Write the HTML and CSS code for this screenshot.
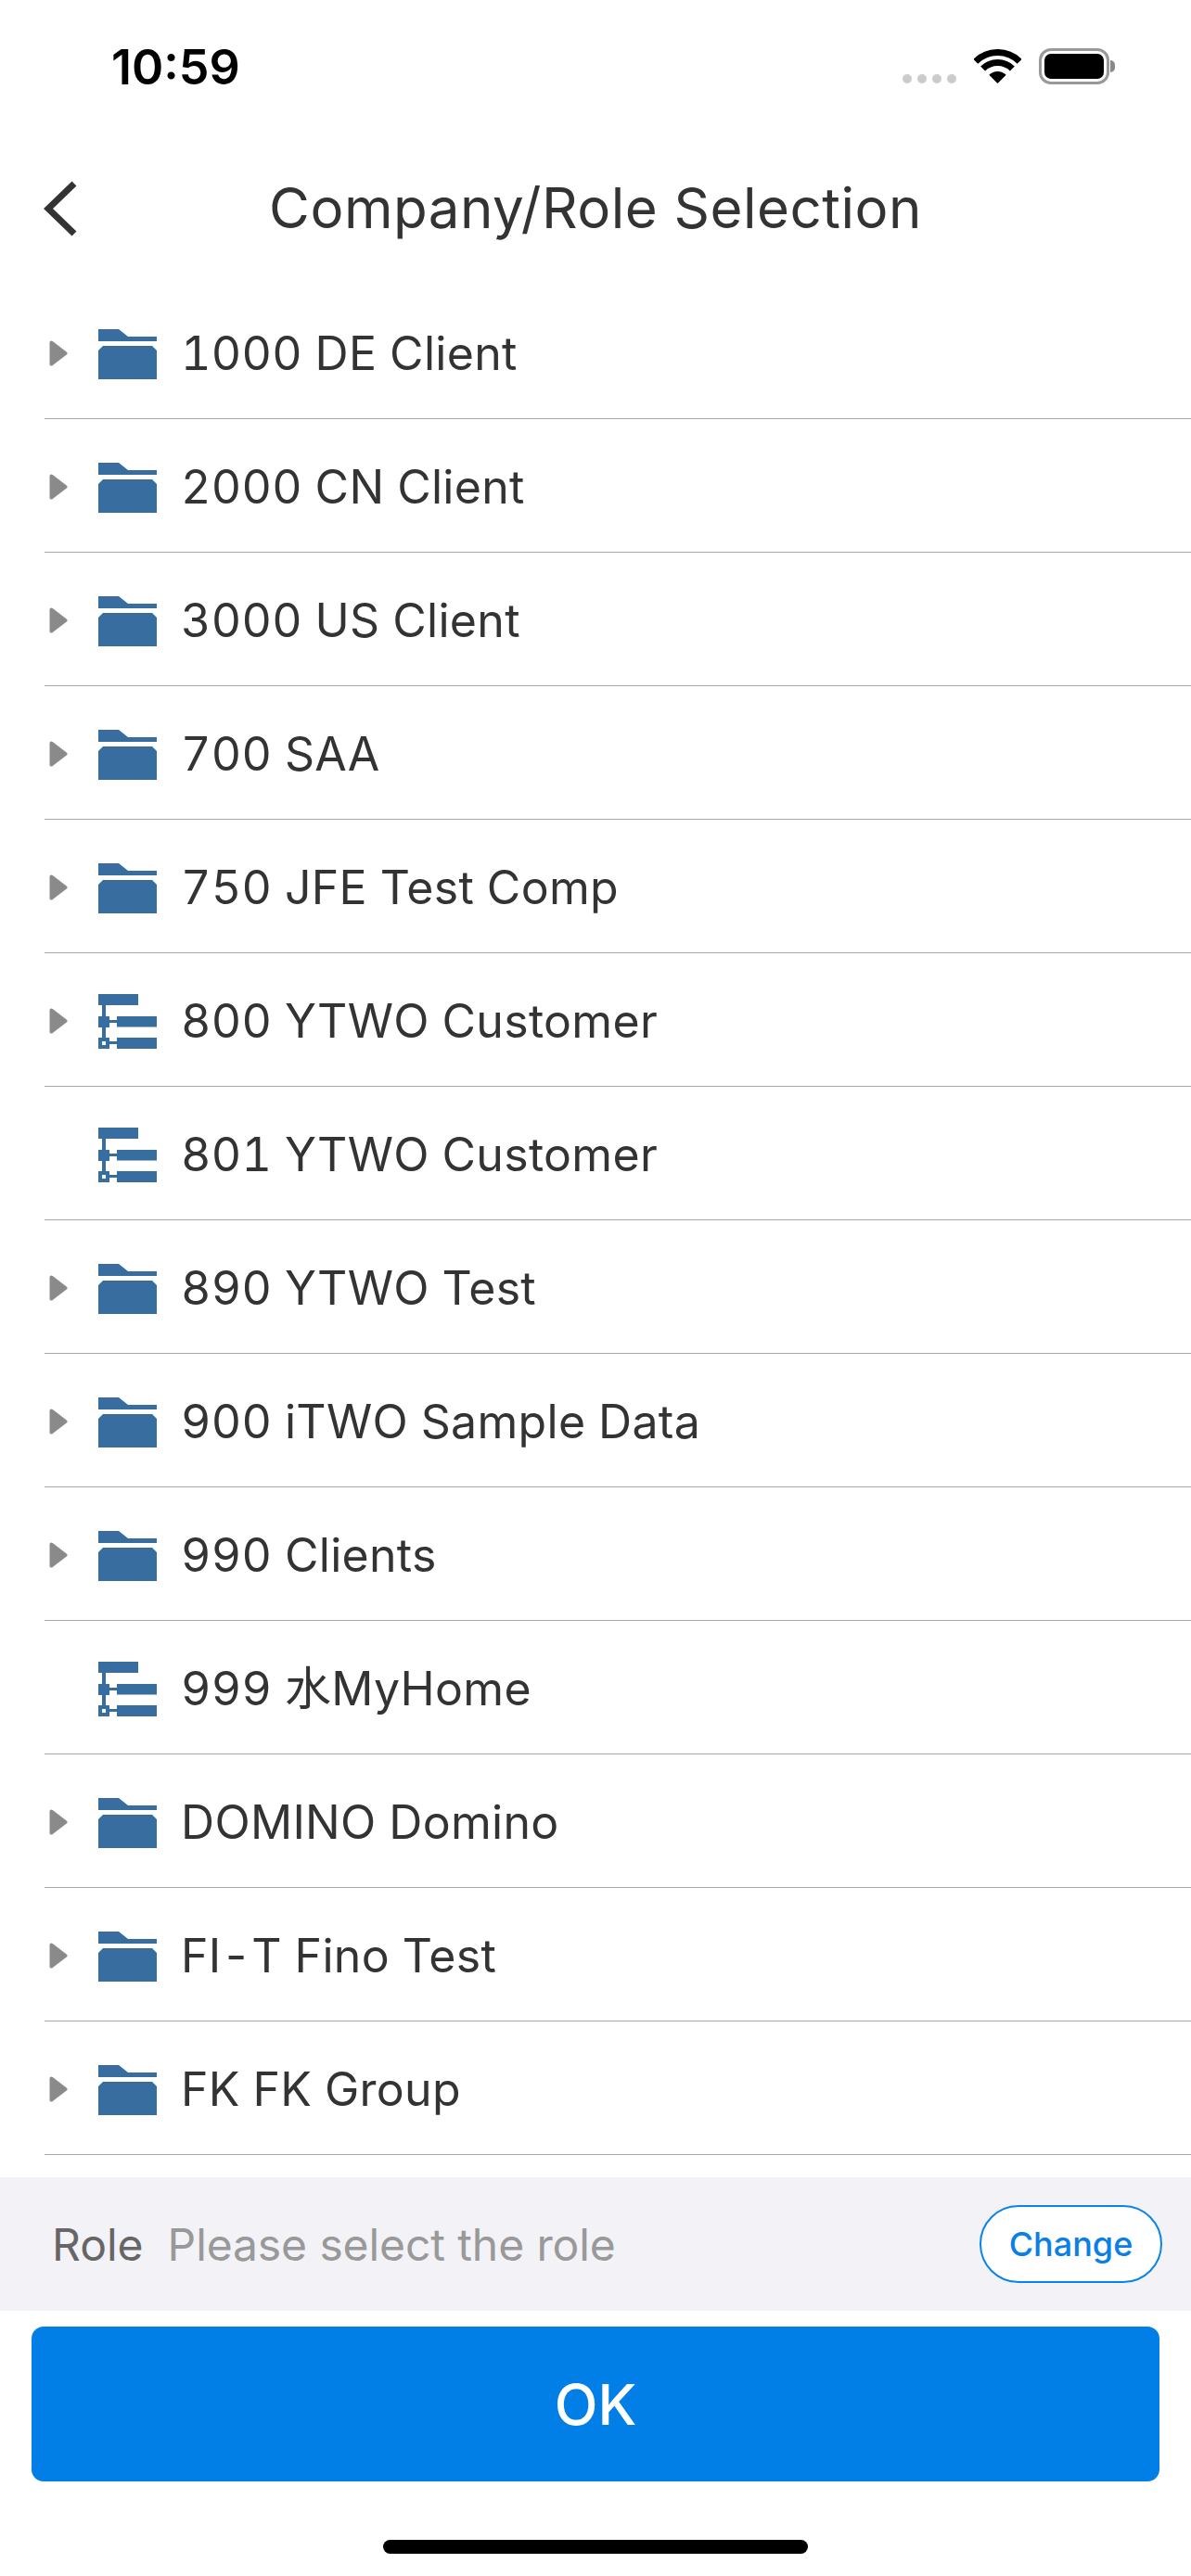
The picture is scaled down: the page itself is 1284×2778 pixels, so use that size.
FILE: index.html
```html
<!DOCTYPE html>
<html lang="en">
<head>
<meta charset="utf-8">
<title>Company/Role Selection</title>
<link rel="stylesheet" href="styles.css">
</head>
<body>
<svg class="sprite" width="0" height="0" aria-hidden="true">
  <symbol id="arrow" viewBox="0 0 20 28"><path d="M2.500 2.500 L17.500 14 L2.500 25.500 Z" fill="#8a8a8a" stroke="#8a8a8a" stroke-width="4" stroke-linejoin="round"/></symbol>
  <symbol id="folder" viewBox="0 0 63 60"><path fill="#386e9f" d="M0 3H22L32 11H63V16H0Z"/><path fill="#386e9f" d="M5 21H58L63 26V57H0V26Z"/></symbol>
  <symbol id="tree" viewBox="0 0 63 60"><g fill="#386e9f"><rect x="0" y="0" width="43" height="12"/><rect x="4" y="12" width="4" height="36"/><rect x="20" y="24" width="43" height="11.500"/><rect x="20" y="47" width="43" height="12"/><rect x="12" y="28" width="8" height="3"/><rect x="12" y="51" width="8" height="3"/><path fill-rule="evenodd" d="M0 24H12V36H0ZM4 28V32H8V28Z"/><path fill-rule="evenodd" d="M0 47H12V59H0ZM4 51V55H8V51Z"/></g></symbol>
</svg>
<div class="screen">
  <div class="status">
    <span class="time">10:59</span>
    <div class="status-icons">
      <div class="dots"><i></i><i></i><i></i><i></i></div>
      <svg class="wifi" width="51" height="37" viewBox="0 0 51 37"><g fill="none" stroke="#000" stroke-width="7"><path d="M1.810 13.310A33.500 33.500 0 0 1 49.190 13.310"/><path d="M9.600 21.100A22.500 22.500 0 0 1 41.400 21.100"/></g><path d="M25.500 37L16.310 27.810A13 13 0 0 1 34.690 27.810Z"/></svg>
      <div class="battery"><div class="battery-shell"><div class="battery-fill"></div></div><div class="battery-nub"></div></div>
    </div>
  </div>
  <header class="nav">
    <svg class="back" width="36" height="60" viewBox="0 0 36 60"><path d="M33 3L5 30L33 57" fill="none" stroke="#333" stroke-width="7"/></svg>
    <h1 class="title">Company/Role Selection</h1>
  </header>
  <main class="list">
    <div class="row"><svg class="arrow"><use href="#arrow"/></svg><svg class="icon"><use href="#folder"/></svg><span class="label">1000 DE Client</span></div>
    <div class="row"><svg class="arrow"><use href="#arrow"/></svg><svg class="icon"><use href="#folder"/></svg><span class="label">2000 CN Client</span></div>
    <div class="row"><svg class="arrow"><use href="#arrow"/></svg><svg class="icon"><use href="#folder"/></svg><span class="label">3000 US Client</span></div>
    <div class="row"><svg class="arrow"><use href="#arrow"/></svg><svg class="icon"><use href="#folder"/></svg><span class="label">700 SAA</span></div>
    <div class="row"><svg class="arrow"><use href="#arrow"/></svg><svg class="icon"><use href="#folder"/></svg><span class="label">750 JFE Test Comp</span></div>
    <div class="row"><svg class="arrow"><use href="#arrow"/></svg><svg class="icon"><use href="#tree"/></svg><span class="label">800 YTWO Customer</span></div>
    <div class="row"><span class="arrow"></span><svg class="icon"><use href="#tree"/></svg><span class="label">801 YTWO Customer</span></div>
    <div class="row"><svg class="arrow"><use href="#arrow"/></svg><svg class="icon"><use href="#folder"/></svg><span class="label">890 YTWO Test</span></div>
    <div class="row"><svg class="arrow"><use href="#arrow"/></svg><svg class="icon"><use href="#folder"/></svg><span class="label">900 iTWO Sample Data</span></div>
    <div class="row"><svg class="arrow"><use href="#arrow"/></svg><svg class="icon"><use href="#folder"/></svg><span class="label">990 Clients</span></div>
    <div class="row"><span class="arrow"></span><svg class="icon"><use href="#tree"/></svg><span class="label">999 水MyHome</span></div>
    <div class="row"><svg class="arrow"><use href="#arrow"/></svg><svg class="icon"><use href="#folder"/></svg><span class="label">DOMINO Domino</span></div>
    <div class="row"><svg class="arrow"><use href="#arrow"/></svg><svg class="icon"><use href="#folder"/></svg><span class="label">FI-T Fino Test</span></div>
    <div class="row"><svg class="arrow"><use href="#arrow"/></svg><svg class="icon"><use href="#folder"/></svg><span class="label">FK FK Group</span></div>
  </main>
  <section class="role">
    <span class="role-label">Role</span>
    <span class="role-value">Please select the role</span>
    <button class="change">Change</button>
  </section>
  <div class="actions"><button class="ok">OK</button></div>
  <div class="home"><div class="home-bar"></div></div>
</div>
</body>
</html>
```
FILE: styles.css
```css
* { box-sizing: border-box; }
html, body { margin: 0; padding: 0; background: #fff; }
body { font-family: Inter, "Noto Sans CJK SC", sans-serif; color: #333; }
.sprite { position: absolute; }
.screen { width: 1284px; height: 2778px; display: flex; flex-direction: column; overflow: hidden; background: #fff; }

.status { height: 150px; flex: none; display: flex; justify-content: space-between; align-items: flex-start; padding: 48px 82px 0 120px; }
.time { font-size: 52px; line-height: 50px; font-weight: 600; color: #000; }
.status-icons { display: flex; align-items: flex-start; padding-top: 4px; }
.dots { display: flex; gap: 6px; margin: 28px 19px 0 0; }
.dots i { display: block; width: 10px; height: 10px; border-radius: 50%; background: #ccc; }
.wifi { display: block; margin: 1px 19px 0 0; }
.battery { display: flex; align-items: center; }
.battery-shell { width: 76px; height: 39px; border: 3px solid #999; border-radius: 13px; padding: 3px; }
.battery-fill { width: 100%; height: 100%; background: #000; border-radius: 7px; }
.battery-nub { width: 5px; height: 13px; background: #888; border-radius: 0 7px 7px 0; margin-left: 1px; }

.nav { height: 150px; flex: none; position: relative; display: flex; align-items: center; justify-content: center; }
.back { position: absolute; left: 47px; top: 45px; }
.title { margin: -2px 0 0; font-size: 60px; line-height: 70px; font-weight: 400; letter-spacing: 0.500px; color: #333; }

.list { height: 2048px; flex: none; padding: 8px 0 24px 48px; overflow: hidden; }
.row { height: 144px; display: flex; align-items: center; border-bottom: 1.500px solid #a8a8a8; }
.arrow { display: block; width: 20px; height: 28px; margin: 2px 33px 0 5px; flex: none; }
.icon { display: block; width: 63px; height: 60px; margin: 4px 26px 0 0; flex: none; }
.label { font-size: 50px; line-height: 60px; letter-spacing: 0.300px; font-variant-numeric: tabular-nums; color: #333; white-space: nowrap; position: relative; top: 1px; }

.role { height: 144px; flex: none; background: #f2f2f7; display: flex; align-items: center; padding: 0 31px 0 56px; }
.role-label { font-size: 48px; color: #666; margin-right: 26px; }
.role-value { font-size: 48px; letter-spacing: -0.100px; color: #999; flex: 1; }
.change { width: 197px; height: 84px; padding: 0; border: 2px solid #0a84e8; border-radius: 42px; background: #fff; color: #0a80e6; font: 500 36px Inter, sans-serif; }

.actions { flex: none; padding: 17px 34px 0; }
.ok { display: block; width: 100%; height: 167px; border: 0; border-radius: 13px; background: #017fe6; color: #fff; font: 500 61px Inter, sans-serif; }

.home { flex: 1; display: flex; justify-content: center; padding-top: 63px; }
.home-bar { width: 458px; height: 15px; border-radius: 8px; background: #000; }
```
